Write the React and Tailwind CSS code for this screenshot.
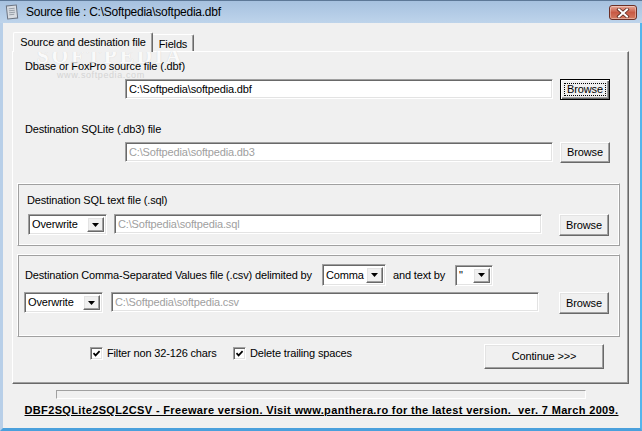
import React from "react";

const sunken =
  "border border-t-[#a0a0a0] border-l-[#a0a0a0] border-r-white border-b-white shadow-[inset_1px_1px_0_#696969,inset_-1px_-1px_0_#e3e3e3]";
const raised =
  "border border-t-white border-l-white border-r-[#696969] border-b-[#696969] shadow-[inset_-1px_-1px_0_#a0a0a0,inset_1px_1px_0_#e3e3e3]";

function Arrow() {
  return (
    <svg width="7" height="4" viewBox="0 0 7 4">
      <path d="M0 0H7L3.5 4Z" fill="#000" />
    </svg>
  );
}

function Combo({ value, className }) {
  return (
    <div className={`h-[21px] bg-white flex p-[2px] ${sunken} ${className}`}>
      <div className="flex-1 flex items-center pl-[1px] text-black leading-none">{value}</div>
      <div className={`w-[17px] bg-[#f0f0f0] flex items-center justify-center ${raised}`}>
        <Arrow />
      </div>
    </div>
  );
}

function Field({ value, disabled, className }) {
  return (
    <div
      className={`h-[20px] bg-white flex items-center pl-[3px] leading-none ${sunken} ${
        disabled ? "text-[#a0a0a0]" : "text-black"
      } ${className}`}
    >
      {value}
    </div>
  );
}

function Button({ children, className, focused }) {
  if (focused) {
    return (
      <div
        className={`bg-[#f0f0f0] border border-black shadow-[inset_1px_1px_0_white,inset_-1px_-1px_0_#696969,inset_-2px_-2px_0_#a0a0a0] flex items-center justify-center p-[3px] ${className}`}
      >
        <div className="w-full h-full border border-dotted border-black flex items-center justify-center leading-none">
          {children}
        </div>
      </div>
    );
  }
  return (
    <div className={`bg-[#f0f0f0] flex items-center justify-center leading-none ${raised} ${className}`}>
      {children}
    </div>
  );
}

function Check({ label }) {
  return (
    <div className="flex items-center">
      <div className={`w-[13px] h-[13px] bg-white flex items-center justify-center ${sunken}`}>
        <svg width="9" height="9" viewBox="0 0 9 9">
          <path d="M1.5 4.2 L3.6 6.4 L7.6 2.2" stroke="#000" strokeWidth="1.7" fill="none" />
        </svg>
      </div>
      <span className="ml-[4px] leading-none">{label}</span>
    </div>
  );
}

const group =
  "border border-t-white border-l-white border-r-[#a0a0a0] border-b-[#a0a0a0] shadow-[inset_1px_1px_0_#a0a0a0,inset_-1px_-1px_0_white]";

export default function App() {
  return (
    <div className="w-[642px] h-[431px] relative overflow-hidden bg-[#f0f0f0] font-['Liberation_Sans',Arial,sans-serif] text-[11px] tracking-[-0.15px] text-black flex flex-col">
      {/* title bar */}
      <div className="h-[23px] shrink-0 bg-gradient-to-b from-[#a6c1df] to-[#bed4eb] border-t border-[#5d7897] flex items-center relative">
        <svg className="ml-[5px]" width="14" height="16" viewBox="0 0 14 16">
          <g transform="rotate(-6 7 8)">
            <rect x="2" y="1.5" width="10" height="13" fill="#d9dde2" stroke="#6b7380" strokeWidth="1" />
            <path d="M4 4.5H10M4 6.5H10M4 8.5H10M4 10.5H9" stroke="#8b939d" strokeWidth="0.8" />
          </g>
        </svg>
        <span className="ml-[7px] text-[12px] tracking-[-0.25px] text-black leading-none">
          Source file : C:\Softpedia\softpedia.dbf
        </span>
        <div className="absolute right-[5px] top-[4px] w-[28px] h-[15px] rounded-[3px] border border-[#6d3026] bg-gradient-to-b from-[#e7a898] via-[#c85a45] to-[#d47a60] shadow-[inset_0_0_0_1px_rgba(255,255,255,0.35)] flex items-center justify-center">
          <svg width="14" height="10" viewBox="0 0 14 10">
            <path d="M3 1.5L11 8.5M11 1.5L3 8.5" stroke="#5a2a20" strokeWidth="3.6" strokeLinecap="square" />
            <path d="M3 1.5L11 8.5M11 1.5L3 8.5" stroke="#ffffff" strokeWidth="2" strokeLinecap="square" />
          </svg>
        </div>
      </div>

      {/* body */}
      <div className="flex-1 flex flex-col border-l-[3px] border-l-[#b8cfe8] border-r-[2px] border-r-[#55b5ec] border-b-[3px] border-b-[#4aa0dc] pl-[9px]">
        {/* tabs */}
        <div className="flex items-end mt-[9px] h-[20px] relative z-10 -mb-[1px]">
          <div className="h-[20px] w-[140px] ml-[1px] bg-[#f0f0f0] border-t border-l border-t-white border-l-white border-r border-r-[#696969] shadow-[inset_-1px_0_0_#a0a0a0] rounded-t-[2px] flex items-center justify-center leading-none">
            Source and destination file
          </div>
          <div className="h-[17px] w-[41px] mb-[1px] bg-[#f0f0f0] border-t border-t-white border-r border-r-[#696969] shadow-[inset_-1px_0_0_#a0a0a0] rounded-tr-[2px] flex items-center justify-center leading-none pt-[2px]">
            Fields
          </div>
        </div>

        {/* panel */}
        <div className="w-[617px] h-[333px] border border-t-white border-l-white border-r-[#696969] border-b-[#696969] shadow-[inset_-1px_-1px_0_#a0a0a0] flex flex-col">
          <div className="ml-[12px] mt-[8px] h-[13px] leading-[13px]">Dbase or FoxPro source file (.dbf)</div>
          <div className="flex items-start mt-[6px]">
            <Field className="ml-[112px] w-[428px]" value="C:\Softpedia\softpedia.dbf" />
            <Button focused className="ml-[7px] w-[50px] h-[21px]">Browse</Button>
          </div>

          <div className="ml-[12px] mt-[23px] h-[13px] leading-[13px]">Destination SQLite (.db3) file</div>
          <div className="flex items-start mt-[6px]">
            <Field disabled className="ml-[112px] w-[428px]" value="C:\Softpedia\softpedia.db3" />
            <Button className="ml-[7px] w-[50px] h-[21px]">Browse</Button>
          </div>

          {/* group 1 */}
          <div className={`ml-[4px] w-[603px] h-[63px] mt-[20px] flex flex-col ${group}`}>
            <div className="ml-[9px] mt-[10px] h-[13px] leading-[13px]">Destination SQL text file (.sql)</div>
            <div className="flex items-start mt-[7px]">
              <Combo className="ml-[10px] w-[79px]" value="Overwrite" />
              <Field disabled className="ml-[7px] w-[428px]" value="C:\Softpedia\softpedia.sql" />
              <Button className="ml-[17px] w-[50px] h-[22px]">Browse</Button>
            </div>
          </div>

          {/* group 2 */}
          <div className={`ml-[4px] w-[603px] h-[83px] mt-[8px] flex flex-col ${group}`}>
            <div className="flex items-center mt-[9px] h-[22px]">
              <span className="ml-[7px] w-[297px] leading-none whitespace-nowrap">
                Destination Comma-Separated Values file (.csv) delimited by
              </span>
              <Combo className="w-[64px] h-[22px]" value="Comma" />
              <span className="ml-[7px] w-[62px] leading-none whitespace-nowrap">and text by</span>
              <Combo className="w-[38px]" value={'"'} />
            </div>
            <div className="flex items-start mt-[6px]">
              <Combo className="ml-[6px] w-[79px]" value="Overwrite" />
              <Field disabled className="ml-[8px] w-[428px]" value="C:\Softpedia\softpedia.csv" />
              <Button className="ml-[20px] w-[50px] h-[22px]">Browse</Button>
            </div>
          </div>

          {/* checkboxes + continue */}
          <div className="flex items-start mt-[7px]">
            <div className="ml-[77px] w-[143px] mt-[3px]">
              <Check label="Filter non 32-126 chars" />
            </div>
            <div className="w-[251px] mt-[3px]">
              <Check label="Delete trailing spaces" />
            </div>
            <Button className="w-[120px] h-[25px]">Continue &gt;&gt;&gt;</Button>
          </div>
        </div>

        {/* progress */}
        <div className="ml-[44px] mt-[6px] w-[530px] h-[9px] border border-t-[#a0a0a0] border-l-[#a0a0a0] border-r-white border-b-white" />

        {/* footer */}
        <div className="mt-[5px] -ml-[9px] text-center font-bold underline leading-[13px] text-[11px] tracking-[0.35px] whitespace-nowrap">
          DBF2SQLite2SQL2CSV - Freeware version. Visit www.panthera.ro for the latest version.&nbsp; ver. 7 March 2009.
        </div>
      </div>

      {/* watermark */}
      <div className="absolute left-[37px] top-[46px] text-[21px] font-bold font-['Liberation_Serif',serif] text-white tracking-[3px] leading-none opacity-70 [text-shadow:0_0_1px_#c0c0c0] pointer-events-none">
        SOFTPEDIA
      </div>
      <div className="absolute left-[57px] top-[71px] text-[9px] text-[#d4d4d4] tracking-[0.6px] leading-none pointer-events-none">
        www.softpedia.com
      </div>
    </div>
  );
}
